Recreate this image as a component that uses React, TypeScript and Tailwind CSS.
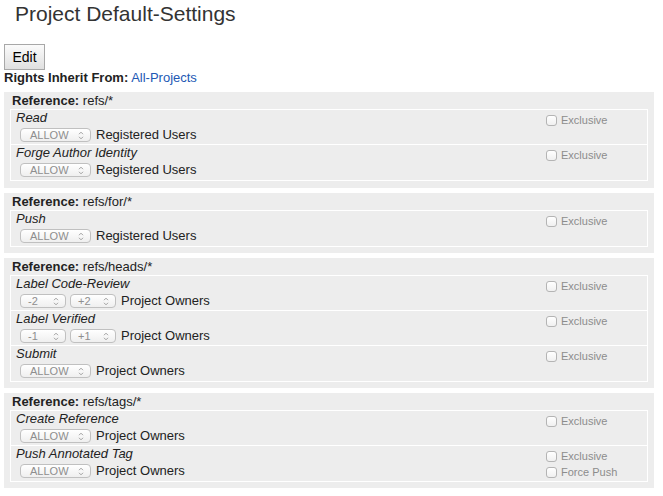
import React from "react";

type Perm = {
  name: string;
  values: string[]; // one select per value
  group: string;
  force?: boolean;
};

const SECTIONS: { ref: string; perms: Perm[] }[] = [
  {
    ref: "refs/*",
    perms: [
      { name: "Read", values: ["ALLOW"], group: "Registered Users" },
      { name: "Forge Author Identity", values: ["ALLOW"], group: "Registered Users" },
    ],
  },
  {
    ref: "refs/for/*",
    perms: [{ name: "Push", values: ["ALLOW"], group: "Registered Users" }],
  },
  {
    ref: "refs/heads/*",
    perms: [
      { name: "Label Code-Review", values: ["-2", "+2"], group: "Project Owners" },
      { name: "Label Verified", values: ["-1", "+1"], group: "Project Owners" },
      { name: "Submit", values: ["ALLOW"], group: "Project Owners" },
    ],
  },
  {
    ref: "refs/tags/*",
    perms: [
      { name: "Create Reference", values: ["ALLOW"], group: "Project Owners" },
      { name: "Push Annotated Tag", values: ["ALLOW"], group: "Project Owners", force: true },
    ],
  },
];

// 작은 위/아래 화살표 (맥 스타일 select)
function Arrows() {
  return (
    <svg width="6" height="9" viewBox="0 0 6 9" className="shrink-0">
      <path d="M1 3.2 L3 1.2 L5 3.2" fill="none" stroke="#a0a0a0" strokeWidth="1" />
      <path d="M1 5.8 L3 7.8 L5 5.8" fill="none" stroke="#a0a0a0" strokeWidth="1" />
    </svg>
  );
}

function FakeSelect({ value }: { value: string }) {
  const wide = value === "ALLOW";
  return (
    <div
      className={[
        "h-[14px] rounded-[4px] border border-[#c0c0c0] bg-gradient-to-b from-white to-[#efefef] flex items-center justify-between text-[11px] leading-none text-[#8e8e8e]",
        wide ? "w-[71px] pl-[9px] pr-[6px]" : "w-[46px] pl-[7px] pr-[6px]",
      ].join(" ")}
    >
      <span>{value}</span>
      <Arrows />
    </div>
  );
}

function Check({ label }: { label: string }) {
  return (
    <div className="flex items-center h-[16px]">
      <span className="w-[11px] h-[11px] rounded-[3px] border border-[#b4b4b4] bg-gradient-to-b from-white to-[#f0f0f0]" />
      <span className="ml-[4px] text-[11px] text-[#8c8c8c]">{label}</span>
    </div>
  );
}

function PermRow({ perm, last }: { perm: Perm; last: boolean }) {
  return (
    <div className={["h-[35px] flex", last ? "" : "border-b border-white"].join(" ")}>
      <div className="flex-1 pl-[5px]">
        <div className="italic leading-[16px]">{perm.name}</div>
        <div className="h-[18px] flex items-center pl-[4px] gap-[4px]">
          {perm.values.map((v) => (
            <FakeSelect key={v} value={v} />
          ))}
          <span className="ml-[1px]">{perm.group}</span>
        </div>
      </div>
      <div className="w-[101px] shrink-0 pt-[2px]">
        <Check label="Exclusive" />
        {perm.force && <Check label="Force Push" />}
      </div>
    </div>
  );
}

export default function App() {
  return (
    <div className="w-[663px] h-[496px] overflow-hidden bg-white text-[13px] text-[#222] font-['Liberation_Sans',Arial,sans-serif]">
      <h1 className="pl-[15px] pt-[2px] text-[21px] leading-[24px] text-[#333]">
        Project Default-Settings
      </h1>

      <div className="pl-[4px] mt-[18px] h-[26px] flex">
        <button
          type="button"
          className="h-[26px] w-[41px] border border-[#a8a8a8] bg-gradient-to-b from-[#fbfbfb] to-[#e0e0e0] text-[14px] text-black"
        >
          Edit
        </button>
      </div>

      <div className="pl-[4px] leading-[15px]">
        <span className="font-bold">Rights Inherit From:</span>{" "}
        <a className="text-[#2258b4]">All-Projects</a>
      </div>

      {/* 참조별 권한 목록 */}
      <div className="mt-[7px] ml-[4px] w-[650px] flex flex-col gap-[5px]">
        {SECTIONS.map((s, idx) => (
          <div
            key={s.ref}
            className={["bg-[#ededed] px-[6px]", idx === 0 ? "pb-[7px]" : "pb-[6px]"].join(" ")}
          >
            <div className="h-[17px] leading-[17px] pl-[2px]">
              <span className="font-bold">Reference:</span> {s.ref}
            </div>
            <div className="border border-white">
              {s.perms.map((p, i) => (
                <PermRow key={p.name} perm={p} last={i === s.perms.length - 1} />
              ))}
            </div>
          </div>
        ))}
      </div>
    </div>
  );
}
